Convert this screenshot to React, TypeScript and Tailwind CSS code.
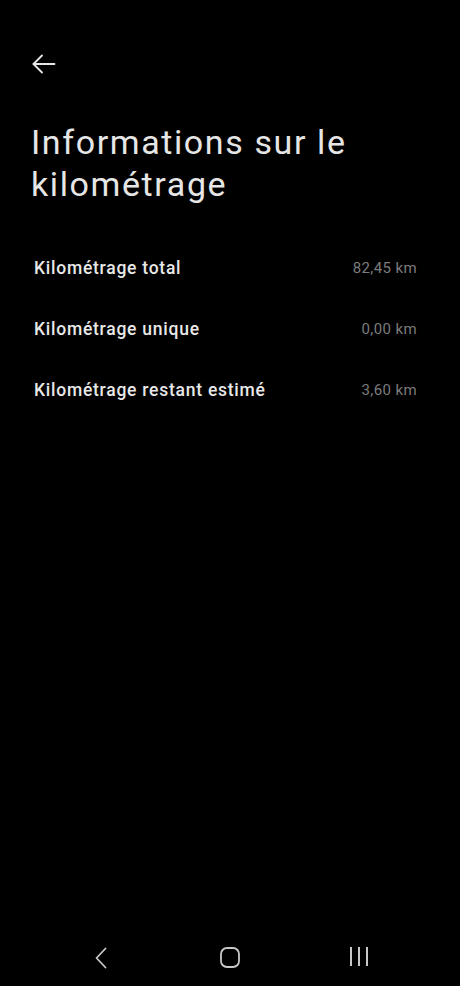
import React from "react";

const rows = [
  { label: "Kilométrage total", value: "82,45 km" },
  { label: "Kilométrage unique", value: "0,00 km" },
  { label: "Kilométrage restant estimé", value: "3,60 km" },
];

const BackArrow = () => (
  <svg width="24" height="20" viewBox="0 0 24 20" fill="none" stroke="#e6e6e6" strokeWidth="1.8" strokeLinecap="round" strokeLinejoin="round">
    <path d="M1.5 10h21" />
    <path d="M10 1.5L1.5 10l8.5 8.5" />
  </svg>
);

const NavBar = () => (
  <div className="h-14 flex items-center">
    <div className="grid grid-cols-3 w-[387px] mx-auto">
      {/* back */}
      <div className="flex justify-center">
        <svg width="12" height="22" viewBox="0 0 12 22" fill="none" stroke="#c8c8c8" strokeWidth="1.8" strokeLinecap="round" strokeLinejoin="round">
          <path d="M10.5 1.5L1.5 11l9 9.5" />
        </svg>
      </div>
      {/* home */}
      <div className="flex justify-center">
        <svg width="20" height="21" viewBox="0 0 20 21" fill="none" stroke="#c8c8c8" strokeWidth="1.8">
          <rect x="1" y="1" width="18" height="19" rx="6" />
        </svg>
      </div>
      {/* recents */}
      <div className="flex justify-center">
        <svg width="18" height="19" viewBox="0 0 18 19" fill="#c8c8c8">
          <rect x="0" y="0" width="2" height="19" />
          <rect x="8" y="0" width="2" height="19" />
          <rect x="16" y="0" width="2" height="19" />
        </svg>
      </div>
    </div>
  </div>
);

export default function App() {
  return (
    <div
      className="min-h-[986px] w-full bg-black flex flex-col"
      style={{ fontFamily: "Roboto, 'Noto Sans', sans-serif" }}
    >
      <div className="flex-1">
        <div className="pt-[54px] pl-8">
          <BackArrow />
        </div>

        <h1 className="mt-[47px] pl-[31px] pr-4 text-[34px] leading-[42px] tracking-[1.6px] font-normal text-[#e6e6e6]">
          Informations sur le
          <br />
          kilométrage
        </h1>

        <div className="mt-8 pl-[34px] pr-[43px]">
          {rows.map(row => (
            <div key={row.label} className="h-[61px] flex items-center justify-between">
              <span className="text-[17.5px] leading-6 tracking-[0.75px] font-medium text-[#e8e8e8]">
                {row.label}
              </span>
              <span className="text-[15px] leading-6 tracking-[0.4px] text-[#7c7c7c]">
                {row.value}
              </span>
            </div>
          ))}
        </div>
      </div>

      <NavBar />
    </div>
  );
}
